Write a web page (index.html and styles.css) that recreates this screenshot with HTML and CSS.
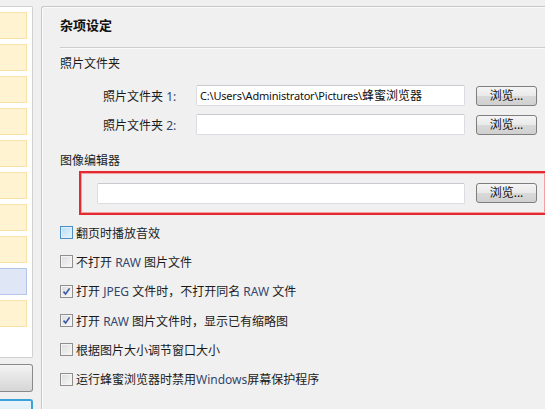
FILE: index.html
```html
<!DOCTYPE html>
<html lang="zh-CN">
<head>
<meta charset="utf-8">
<title>杂项设定</title>
<link rel="stylesheet" href="styles.css">
</head>
<body>
<div class="window">
  <div class="sidebar">
    <div class="list">
      <div class="item"></div>
      <div class="item"></div>
      <div class="item"></div>
      <div class="item"></div>
      <div class="item"></div>
      <div class="item"></div>
      <div class="item"></div>
      <div class="item"></div>
      <div class="item selected"></div>
      <div class="item"></div>
    </div>
    <div class="side-btn"></div>
    <div class="side-btn focused"></div>
  </div>
  <div class="group">
    <div class="title">杂项设定</div>
    <div class="sep"></div>
    <div class="section">照片文件夹</div>
    <div class="field-row first">
      <span class="label">照片文件夹 <span class="lat">1:</span></span>
      <div class="input path"><span class="lat-in">C:\Users\Administrator\Pictures\</span>蜂蜜浏览器</div>
      <button class="btn">浏览...</button>
    </div>
    <div class="field-row second">
      <span class="label">照片文件夹 <span class="lat">2:</span></span>
      <div class="input path"></div>
      <button class="btn">浏览...</button>
    </div>
    <div class="section editor-title">图像编辑器</div>
    <div class="highlight">
      <div class="input editor"></div>
      <button class="btn">浏览...</button>
    </div>
    <div class="checks">
      <div class="check-row"><span class="box hover"></span><span class="text">翻页时播放音效</span></div>
      <div class="check-row"><span class="box"></span><span class="text">不打开 <span class="lat">RAW</span> 图片文件</span></div>
      <div class="check-row"><span class="box checked"><svg viewBox="0 0 9 9" width="9" height="9"><path d="M1.5 4.6 L3.6 7 L7.6 1.4" fill="none" stroke="#3a57a6" stroke-width="1.6"/></svg></span><span class="text">打开 <span class="lat">JPEG</span> 文件时，不打开同名 <span class="lat">RAW</span> 文件</span></div>
      <div class="check-row"><span class="box checked"><svg viewBox="0 0 9 9" width="9" height="9"><path d="M1.5 4.6 L3.6 7 L7.6 1.4" fill="none" stroke="#3a57a6" stroke-width="1.6"/></svg></span><span class="text">打开 <span class="lat">RAW</span> 图片文件时，显示已有缩略图</span></div>
      <div class="check-row"><span class="box"></span><span class="text">根据图片大小调节窗口大小</span></div>
      <div class="check-row"><span class="box"></span><span class="text">运行蜂蜜浏览器时禁用<span class="lat">Windows</span>屏幕保护程序</span></div>
    </div>
  </div>
</div>
</body>
</html>
```
FILE: styles.css
```css
* { box-sizing: border-box; }
html, body {
  margin: 0;
  padding: 0;
  width: 545px;
  height: 409px;
  overflow: hidden;
  background: #f0f0f0;
}
body {
  font-family: "Noto Sans", "Noto Sans CJK SC", sans-serif;
  font-size: 12px;
  color: #1b1b1b;
}
.window {
  display: flex;
  align-items: flex-start;
  height: 409px;
}
.sidebar {
  width: 33px;
  flex-shrink: 0;
  padding-top: 6px;
  display: flex;
  flex-direction: column;
}
.list {
  height: 352px;
  background: #fff;
  border: 1px solid #d0d0d0;
  border-left: none;
  border-radius: 0 2px 2px 0;
  padding: 5px 5px 0 0;
  display: flex;
  flex-direction: column;
  gap: 5px;
}
.item {
  height: 27px;
  background: #fff3d2;
  border: 1px solid #fbe3a8;
  border-left: none;
}
.item.selected {
  background: #dfe7f6;
  border-color: #b3c6ea;
}
.side-btn {
  margin-top: 6px;
  height: 28px;
  border: 1px solid #8a8a8a;
  border-left: none;
  border-radius: 0 3px 3px 0;
  background: linear-gradient(#f4f4f4, #e4e4e4 50%, #d6d6d6);
}
.side-btn.focused {
  margin-top: 7px;
  height: 20px;
  border: 2px solid #3aa2d8;
  border-left: none;
  border-bottom: none;
  border-radius: 0 3px 0 0;
  background: linear-gradient(#eaf4fa, #d8ebf6);
}
.group {
  margin-left: 8px;
  margin-top: 6px;
  width: 504px;
  height: 403px;
  flex-shrink: 0;
  border: 1px solid #c7c7c7;
  border-right: none;
  border-bottom: none;
  border-radius: 3px 0 0 0;
  box-shadow: inset 1px 1px 0 #fbfbfb;
  padding-left: 18px;
}
.title {
  margin-top: 9px;
  height: 18px;
  line-height: 18px;
  font-size: 13px;
  font-weight: bold;
  color: #111;
}
.sep {
  margin-top: 13px;
  border-top: 1px solid #cdcdcd;
  border-bottom: 1px solid #fafafa;
}
.section {
  margin-top: 6px;
  height: 18px;
  line-height: 18px;
  color: #1b1b1b;
}
.field-row {
  display: flex;
  align-items: center;
  height: 21px;
}
.field-row.first { margin-top: 12px; }
.field-row.second { margin-top: 8px; }
.label {
  width: 136px;
  padding-left: 43px;
  white-space: nowrap;
  color: #1b1b1b;
}
.lat { color: #33466e; }
.input {
  height: 21px;
  background: #fff;
  border: 1px solid #dcdde2;
  border-top-color: #c9cad0;
  border-radius: 2px;
  line-height: 19px;
  padding-left: 3px;
  white-space: nowrap;
  overflow: hidden;
  color: #111;
}
.input.path { width: 269px; }
.lat-in { font-size: 11px; letter-spacing: -0.2px; }
.btn {
  margin-left: 11px;
  width: 61px;
  height: 20px;
  padding: 0;
  font-family: inherit;
  font-size: 12px;
  color: #111;
  border: 1px solid #7e7e7e;
  border-radius: 3px;
  background: linear-gradient(#f5f5f5, #e9e9e9 50%, #d9d9d9 51%, #d0d0d0);
  line-height: 18px;
}
.editor-title { margin-top: 17px; }
.highlight {
  margin-top: 1px;
  margin-left: 19px;
  width: 466px;
  height: 44px;
  border: 2px solid #e42a31;
  border-right: none;
  box-shadow: inset 0 0 0 1px #f4a0a3;
  padding-left: 16px;
  display: flex;
  align-items: center;
}
.input.editor { width: 368px; }
.checks {
  margin-top: 3px;
  display: flex;
  flex-direction: column;
}
.check-row {
  height: 29.3px;
  display: flex;
  align-items: center;
  gap: 3px;
}
.box {
  width: 13px;
  height: 13px;
  border: 1px solid #8f8f8f;
  background: linear-gradient(135deg, #dcdcdc, #f7f7f7);
  box-shadow: inset 0 0 0 1px #f4f4f4;
  display: flex;
  align-items: center;
  justify-content: center;
}
.box.hover {
  border-color: #4b8fc4;
  background: linear-gradient(135deg, #b9dcf3, #e9f5fc);
  box-shadow: inset 0 0 0 1px #dff0fb;
}
.box.checked svg { display: block; }
.text { white-space: nowrap; }
```
